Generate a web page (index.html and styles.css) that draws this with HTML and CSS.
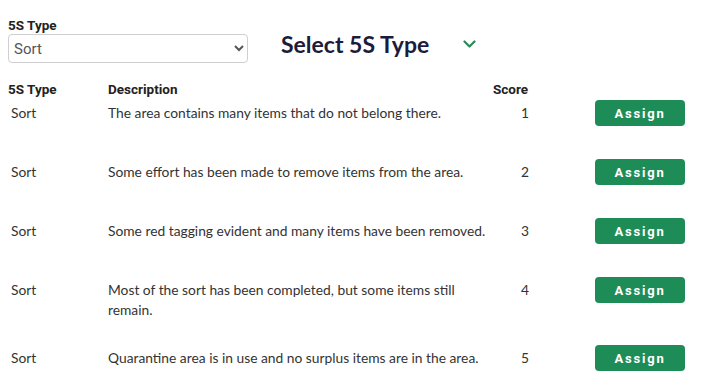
FILE: index.html
```html
<!DOCTYPE html>
<html lang="en">
<head>
    <meta charset="UTF-8">
    <title>5S Scoring</title>
    <link rel="stylesheet" href="styles.css">
</head>
<body>
    <div class="container">
        <div class="top-row">
            <div class="field">
                <label for="typeSelect">5S Type</label>
                <select id="typeSelect">
                    <option>Sort</option>
                    <option>Set in Order</option>
                    <option>Shine</option>
                    <option>Standardize</option>
                    <option>Sustain</option>
                </select>
            </div>
            <h1 class="title">Select 5S Type</h1>
            <svg class="chevron" width="13" height="9" viewBox="0 0 13 9">
                <path d="M1.5 1.5 L6.5 6.5 L11.5 1.5" fill="none" stroke="#2a8a5a" stroke-width="2.2" stroke-linecap="round" stroke-linejoin="round"/>
            </svg>
        </div>

        <div class="score-table">
            <div class="th">5S Type</div>
            <div class="th">Description</div>
            <div class="th">Score</div>
            <div class="th"></div>

            <div class="td type">Sort</div>
            <div class="td">The area contains many items that do not belong there.</div>
            <div class="td score">1</div>
            <div class="td action"><button>Assign</button></div>

            <div class="td type">Sort</div>
            <div class="td">Some effort has been made to remove items from the area.</div>
            <div class="td score">2</div>
            <div class="td action"><button>Assign</button></div>

            <div class="td type">Sort</div>
            <div class="td">Some red tagging evident and many items have been removed.</div>
            <div class="td score">3</div>
            <div class="td action"><button>Assign</button></div>

            <div class="td type">Sort</div>
            <div class="td">Most of the sort has been completed, but some items still remain.</div>
            <div class="td score">4</div>
            <div class="td action"><button>Assign</button></div>

            <div class="td type">Sort</div>
            <div class="td">Quarantine area is in use and no surplus items are in the area.</div>
            <div class="td score">5</div>
            <div class="td action"><button>Assign</button></div>
        </div>
    </div>
</body>
</html>
```

FILE: styles.css
```css
/* Global */
* {
    margin: 0;
    padding: 0;
    box-sizing: border-box;
}

body {
    background: #fff;
    color: #333;
    font-family: 'Lato', sans-serif;
    font-size: 13.8px;
}

.container {
    padding: 17px 8px 0;
}

/* Top row */
.top-row {
    display: flex;
    align-items: flex-start;
}

.field {
    display: flex;
    flex-direction: column;
    width: 240px;
}

.field label {
    font-family: 'Roboto', sans-serif;
    font-weight: 700;
    font-size: 13.5px;
    line-height: 16px;
    color: #222;
    margin-bottom: 1px;
}

.field select {
    height: 29px;
    border: 1px solid #cfcfcf;
    border-radius: 4px;
    padding: 0 1px;
    font-family: 'Roboto', sans-serif;
    font-size: 15px;
    color: #555;
    background: #fff;
}

.title {
    margin: 12px 0 0 33px;
    font-family: 'Lato', sans-serif;
    font-weight: 700;
    font-size: 23px;
    line-height: 30px;
    color: #1b1c3b;
}

.chevron {
    margin: 23px 0 0 34px;
}

/* Table */
.score-table {
    display: grid;
    grid-template-columns: 100px 385px 36px 156px;
    align-items: start;
    margin-top: 18px;
}

.th {
    font-family: 'Roboto', sans-serif;
    font-weight: 700;
    font-size: 13.5px;
    line-height: 16px;
    color: #222;
    padding-bottom: 3px;
}

.td {
    padding: 3px 0 25px;
    line-height: 20px;
}

.td.type {
    padding-left: 3px;
}

.td.score {
    text-align: right;
}

.td.action {
    padding: 0 0 25px;
    justify-self: end;
}

/* last row has no trailing space */
.td:nth-last-child(-n+4) {
    padding-bottom: 0;
}

button {
    display: block;
    width: 90px;
    height: 26px;
    margin-bottom: 8px;
    background: #1e8c56;
    color: #fff;
    border: none;
    border-radius: 4px;
    font-family: 'Roboto', sans-serif;
    font-weight: 700;
    font-size: 13px;
    letter-spacing: 1.8px;
    cursor: pointer;
}
```
